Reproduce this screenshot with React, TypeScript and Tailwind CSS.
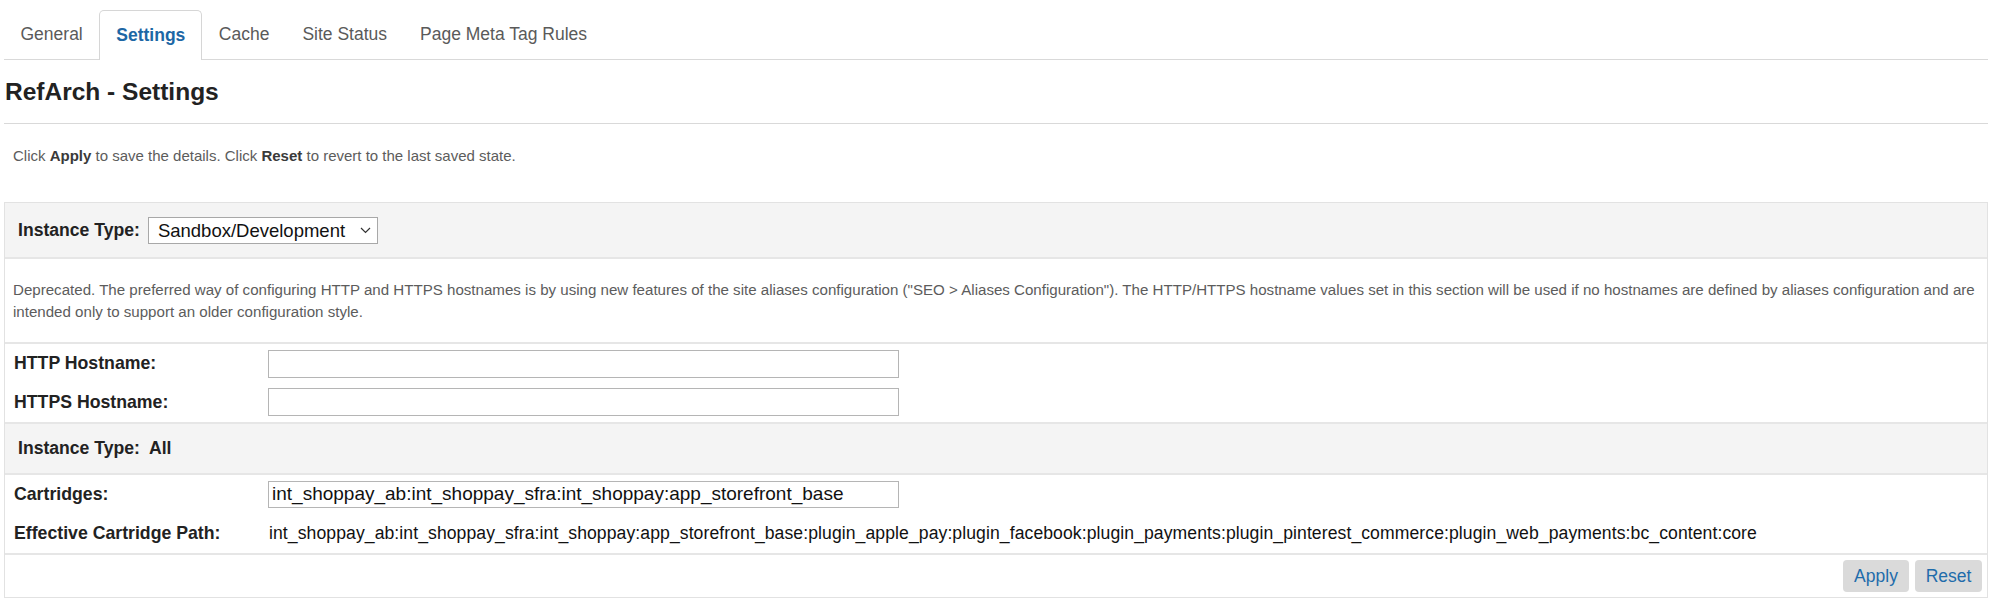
import React from "react";

const font = { fontFamily: '"Liberation Sans", Arial, Helvetica, sans-serif' };

function Tab({ label, active }: { label: string; active?: boolean }) {
  if (active) {
    return (
      <div className="relative -mb-px flex h-[50px] items-center rounded-t-[5px] border border-b-0 border-[#d6d6d6] bg-white px-[16px] text-[17.5px] font-bold text-[#1d67a5]">
        {label}
      </div>
    );
  }
  return (
    <div className="flex h-[49px] items-center px-[16.5px] text-[17.5px] text-[#5a5a5a]">{label}</div>
  );
}

function Chevron() {
  return (
    <svg width="11" height="7" viewBox="0 0 11 7" className="ml-auto">
      <path d="M1 1 L5.5 5.5 L10 1" fill="none" stroke="#333" strokeWidth="1.2" />
    </svg>
  );
}

export default function App() {
  return (
    <div className="min-h-[607px] bg-white pl-1 pr-[11px] text-[#222]" style={font}>
      {/* Tabs */}
      <div className="flex items-end border-b border-[#d9d9d9] pt-[10px]">
        <Tab label="General" />
        <Tab label="Settings" active />
        <Tab label="Cache" />
        <Tab label="Site Status" />
        <Tab label="Page Meta Tag Rules" />
      </div>

      {/* Title */}
      <div className="flex h-[64px] items-center border-b border-[#d9d9d9] pl-px pt-[2px]">
        <h1 className="text-[24.5px] font-bold text-[#222]">RefArch - Settings</h1>
      </div>

      {/* Instruction */}
      <div className="pl-[9px] pt-[22px] text-[15px] leading-[20px] text-[#5c5c5c]">
        Click <span className="font-bold text-[#3a3a3a]">Apply</span> to save the details. Click{" "}
        <span className="font-bold text-[#3a3a3a]">Reset</span> to revert to the last saved state.
      </div>

      {/* Box */}
      <div className="mt-[36px] border border-[#e2e2e2]">
        {/* Header row */}
        <div className="flex h-[54px] items-center gap-2 bg-[#f4f4f4] pl-[13px] pt-[1px]">
          <span className="text-[17.6px] font-bold">Instance Type:</span>
          <div className="flex h-[27px] w-[230px] items-center border border-[#a8a8a8] bg-white pl-[9px] pr-[6px] text-[18.5px] text-[#111]">
            Sandbox/Development
            <Chevron />
          </div>
        </div>

        {/* Deprecated */}
        <div className="border-t-2 border-[#e6e6e6] pb-[19px] pl-[8px] pt-[20px] text-[15.1px] leading-[22px] text-[#5c5c5c]">
          Deprecated. The preferred way of configuring HTTP and HTTPS hostnames is by using new features of the site aliases configuration ("SEO &gt; Aliases Configuration"). The HTTP/HTTPS hostname values set in this section will be used if no hostnames are defined by aliases configuration and are
          <br />
          intended only to support an older configuration style.
        </div>

        {/* Hostnames */}
        <div className="border-t-2 border-[#e6e6e6]">
          <div className="flex h-[38px] items-center pt-[1px]">
            <span className="w-[263px] shrink-0 pl-[9px] text-[17.7px] font-bold">HTTP Hostname:</span>
            <div className="h-[28px] w-[631px] border border-[#b5b5b5] bg-white" />
          </div>
          <div className="flex h-[40px] items-center">
            <span className="w-[263px] shrink-0 pl-[9px] text-[17.7px] font-bold">HTTPS Hostname:</span>
            <div className="h-[28px] w-[631px] border border-[#b5b5b5] bg-white" />
          </div>
        </div>

        {/* Instance Type All */}
        <div className="flex h-[51px] items-center border-t-2 border-[#e6e6e6] bg-[#f4f4f4] pl-[13px] text-[17.6px] font-bold">
          Instance Type:&nbsp; All
        </div>

        {/* Cartridges */}
        <div className="border-t-2 border-[#e6e6e6]">
          <div className="flex h-[38px] items-center pt-[1px]">
            <span className="w-[263px] shrink-0 pl-[9px] text-[17.7px] font-bold">Cartridges:</span>
            <div className="flex h-[27px] w-[631px] items-center border border-[#b5b5b5] bg-white pl-[3px] text-[19px] text-[#111]">
              int_shoppay_ab:int_shoppay_sfra:int_shoppay:app_storefront_base
            </div>
          </div>
          <div className="flex h-[40px] items-center">
            <span className="w-[264px] shrink-0 pl-[9px] text-[17.7px] font-bold">Effective Cartridge Path:</span>
            <span className="whitespace-nowrap text-[17.6px] tracking-[0.08px] text-[#111]">
              int_shoppay_ab:int_shoppay_sfra:int_shoppay:app_storefront_base:plugin_apple_pay:plugin_facebook:plugin_payments:plugin_pinterest_commerce:plugin_web_payments:bc_content:core
            </span>
          </div>
        </div>

        {/* Buttons */}
        <div className="flex h-[44px] items-center justify-end gap-[6px] border-t-2 border-[#e6e6e6] pr-[5px]">
          <button className="h-[32px] w-[66px] rounded-[4px] bg-[#dadada] text-[17.5px] text-[#1f6cab]">Apply</button>
          <button className="h-[32px] w-[67px] rounded-[4px] bg-[#dadada] text-[17.5px] text-[#1f6cab]">Reset</button>
        </div>
      </div>
    </div>
  );
}
